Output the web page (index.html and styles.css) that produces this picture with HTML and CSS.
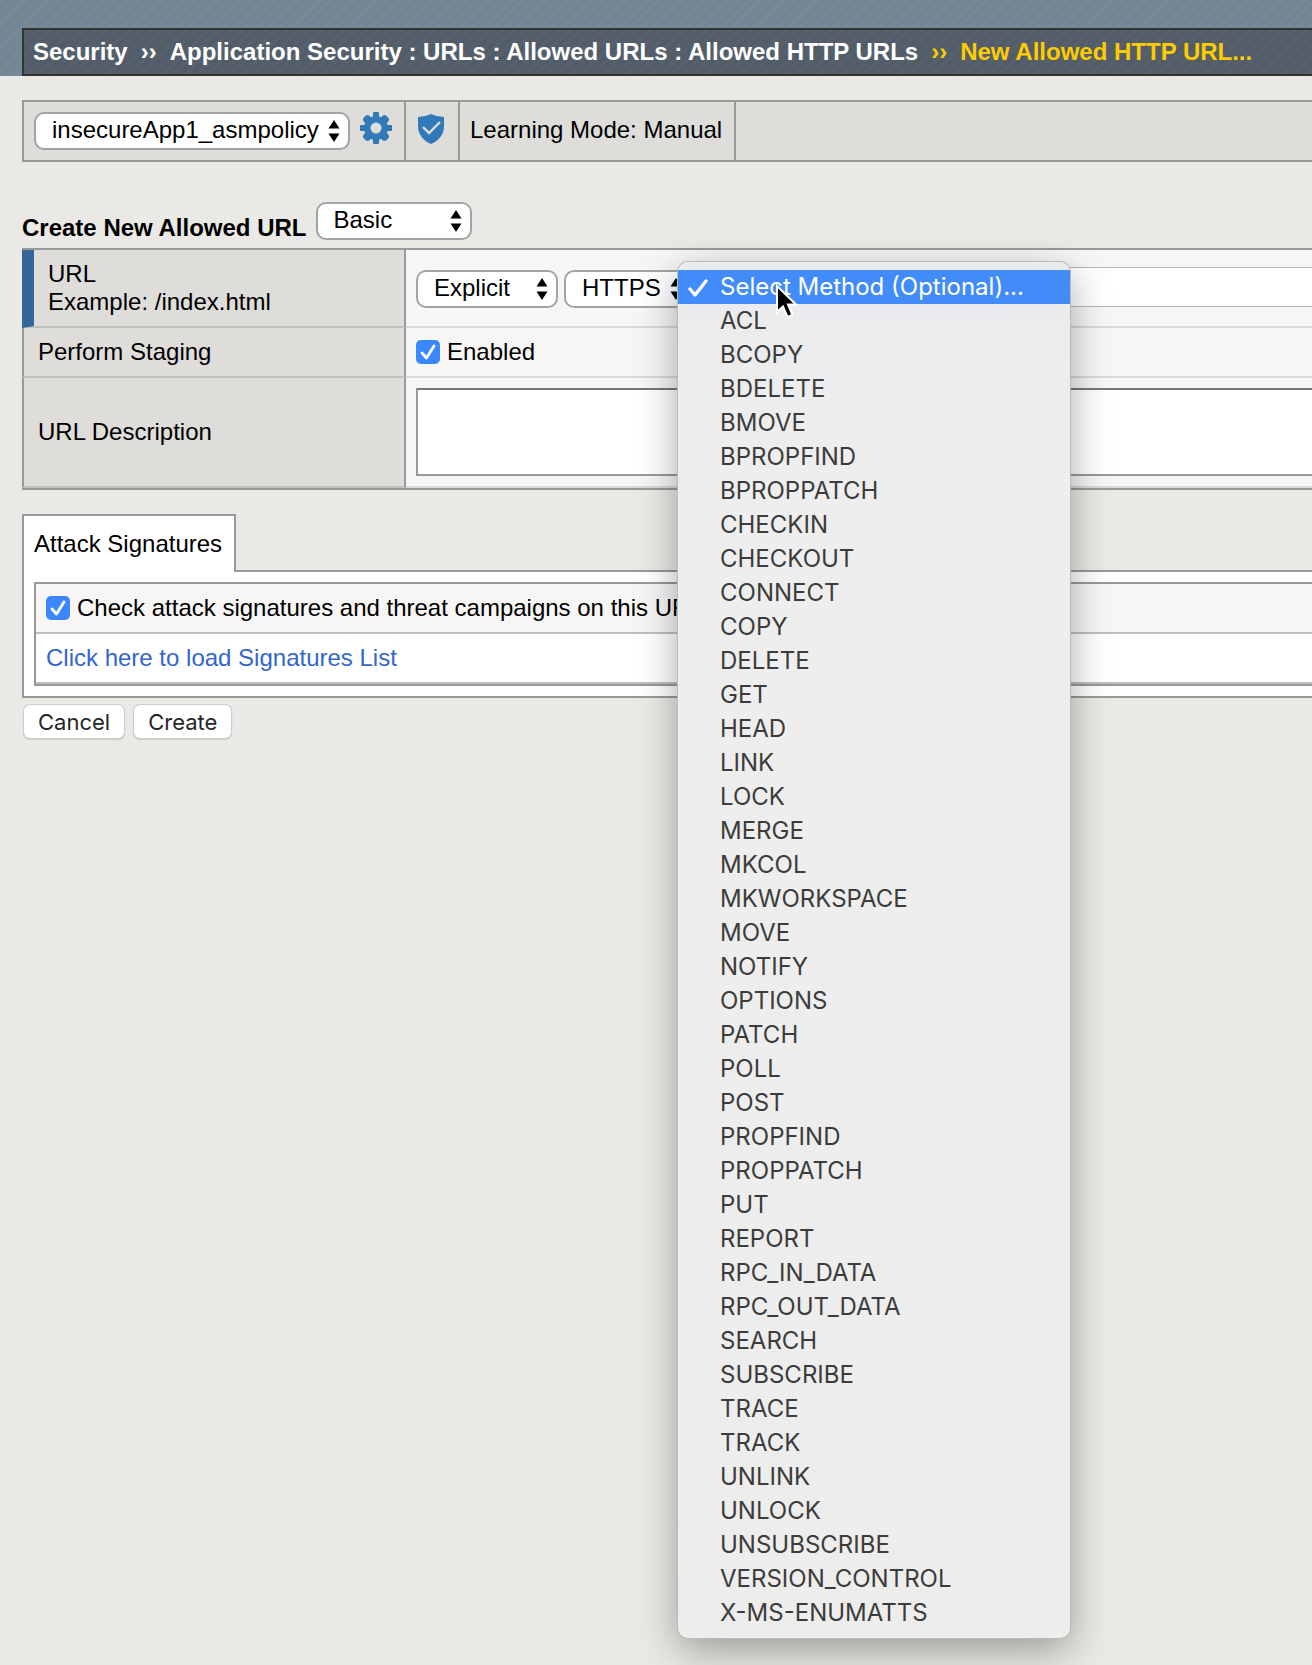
FILE: index.html
```html
<!DOCTYPE html>
<html lang="en">
<head>
<meta charset="utf-8">
<title>New Allowed HTTP URL</title>
<link rel="stylesheet" href="styles.css">
</head>
<body>
<header class="masthead">
  <nav class="breadcrumb" aria-label="Breadcrumb">
    <span>Security</span>
    <span>››</span>
    <span>Application Security : URLs : Allowed URLs : Allowed HTTP URLs</span>
    <span class="current">››</span>
    <span class="current">New Allowed HTTP URL...</span>
  </nav>
</header>
<main class="content">
  <div class="policy-bar">
    <div class="policy-cell policy-picker">
      <select class="select select-policy" aria-label="Policy"><option>insecureApp1_asmpolicy</option></select>
      <svg class="gear" viewBox="0 0 32 32" width="32" height="32" aria-hidden="true">
        <g fill="#317ab9">
          <rect x="13" y="0" width="6" height="32" rx="1"/>
          <rect x="12" y="0" width="8" height="32" rx="3" transform="rotate(45 16 16)"/>
          <rect x="13" y="0" width="6" height="32" rx="1" transform="rotate(90 16 16)"/>
          <rect x="12" y="0" width="8" height="32" rx="3" transform="rotate(135 16 16)"/>
          <circle cx="16" cy="16" r="12"/>
        </g>
        <circle cx="16" cy="16" r="5.5" fill="#dedddA"/>
      </svg>
    </div>
    <div class="policy-cell">
      <svg class="shield" viewBox="0 0 28 30" width="28" height="30" aria-hidden="true">
        <path d="M14 0 Q8 3 1 3 V12 Q1 24 14 30 Q27 24 27 12 V3 Q20 3 14 0Z" fill="#317ab9"/>
        <path d="M6 13 L12 19 L23 8" fill="none" stroke="#dedddA" stroke-width="2.4"/>
      </svg>
    </div>
    <div class="policy-cell">Learning Mode: Manual</div>
  </div>

  <div class="form-head">
    <h1 class="form-title">Create New Allowed URL</h1>
    <select class="select select-level" aria-label="View"><option>Basic</option></select>
  </div>

  <div class="form-grid">
    <div class="row">
      <div class="label required"><label for="url">URL<br>Example: /index.html</label></div>
      <div class="field url-field">
        <select class="select select-type" aria-label="URL type"><option>Explicit</option></select>
        <select class="select select-protocol" aria-label="Protocol"><option>HTTPS</option></select>
        <div class="method">
          <select class="select select-method" aria-label="Method"><option>Select Method (Optional)...</option></select>
          <ul class="menu" role="listbox" aria-label="Method">
            <li class="selected" role="option" aria-selected="true"><svg class="tick" viewBox="0 0 20 20" width="20" height="20" aria-hidden="true"><path d="M2 12 L7 18 L18 4" fill="none" stroke="#fff" stroke-width="3.4" stroke-linecap="round" stroke-linejoin="round"/></svg>Select Method (Optional)...</li>
            <li role="option">ACL</li>
            <li role="option">BCOPY</li>
            <li role="option">BDELETE</li>
            <li role="option">BMOVE</li>
            <li role="option">BPROPFIND</li>
            <li role="option">BPROPPATCH</li>
            <li role="option">CHECKIN</li>
            <li role="option">CHECKOUT</li>
            <li role="option">CONNECT</li>
            <li role="option">COPY</li>
            <li role="option">DELETE</li>
            <li role="option">GET</li>
            <li role="option">HEAD</li>
            <li role="option">LINK</li>
            <li role="option">LOCK</li>
            <li role="option">MERGE</li>
            <li role="option">MKCOL</li>
            <li role="option">MKWORKSPACE</li>
            <li role="option">MOVE</li>
            <li role="option">NOTIFY</li>
            <li role="option">OPTIONS</li>
            <li role="option">PATCH</li>
            <li role="option">POLL</li>
            <li role="option">POST</li>
            <li role="option">PROPFIND</li>
            <li role="option">PROPPATCH</li>
            <li role="option">PUT</li>
            <li role="option">REPORT</li>
            <li role="option">RPC_IN_DATA</li>
            <li role="option">RPC_OUT_DATA</li>
            <li role="option">SEARCH</li>
            <li role="option">SUBSCRIBE</li>
            <li role="option">TRACE</li>
            <li role="option">TRACK</li>
            <li role="option">UNLINK</li>
            <li role="option">UNLOCK</li>
            <li role="option">UNSUBSCRIBE</li>
            <li role="option">VERSION_CONTROL</li>
            <li role="option">X-MS-ENUMATTS</li>
          </ul>
          <svg class="pointer" viewBox="0 0 24 36" width="24" height="36" aria-hidden="true"><path d="M2 2 V28 L8 22.500 L12.500 33 L17.500 31 L13 20.500 H21 Z" fill="#000" stroke="#fff" stroke-width="2"/></svg>
        </div>
        <input class="text-input" id="url" type="text">
      </div>
    </div>
    <div class="row">
      <div class="label">Perform Staging</div>
      <div class="field"><label class="check"><input type="checkbox" checked>Enabled</label></div>
    </div>
    <div class="row">
      <div class="label"><label for="desc">URL Description</label></div>
      <div class="field"><textarea class="textarea" id="desc"></textarea></div>
    </div>
  </div>

  <section class="signatures">
    <div class="tabs"><button class="tab" type="button">Attack Signatures</button></div>
    <div class="panel">
      <div class="panel-table">
        <div class="panel-row tinted"><label class="check"><input type="checkbox" checked>Check attack signatures and threat campaigns on this URL</label></div>
        <div class="panel-row"><a class="link" href="#">Click here to load Signatures List</a></div>
      </div>
    </div>
  </section>

  <div class="actions">
    <button class="button" type="button">Cancel</button>
    <button class="button" type="button">Create</button>
  </div>
</main>
</body>
</html>
```
FILE: styles.css
```css
* { box-sizing: border-box; }

body {
  margin: 0;
  min-height: 100vh;
  background: #eae9e5;
  color: #000;
  font: 24px/28px "Liberation Sans", Arial, sans-serif;
}

select, input, textarea, button { font: inherit; color: inherit; margin: 0; }

.masthead {
  padding: 28px 0 0 22px;
  background: repeating-linear-gradient(135deg, #778899 0, #778899 3px, #738494 5px, #738494 7px, #778899 8px);
}

.breadcrumb {
  display: flex;
  gap: 13px;
  height: 48px;
  padding: 8px 9px;
  border: 2px solid #333;
  border-right: 0;
  background: repeating-linear-gradient(135deg, #55606c 0, #55606c 3px, #515c67 5px, #515c67 7px, #55606c 8px);
  color: #fff;
  font-weight: bold;
  white-space: nowrap;
}

.current { color: #fc0; }

.content { padding: 24px 0 0 22px; }

.policy-bar {
  display: flex;
  height: 62px;
  border: 2px solid #999;
  border-right: 0;
  background: #dedddA;
}

.policy-cell {
  display: flex;
  align-items: flex-start;
  padding: 14px 12px 0 10px;
  border-right: 2px solid #999;
}

.policy-picker { gap: 10px; width: 382px; padding-top: 10px; }
.shield { margin: -2px 1px 0; }

.select {
  appearance: none;
  height: 38px;
  padding: 0 28px 2px 16px;
  border: 2px solid #a3a3a3;
  border-radius: 10px;
  background: #fff url("data:image/svg+xml,%3Csvg xmlns='http://www.w3.org/2000/svg' width='12' height='22'%3E%3Cpath d='M6 0L11.500 8.500H.5zM6 22L11.500 13.500H.5z'/%3E%3C/svg%3E") no-repeat right 8px top 6px;
}

.select-policy { width: 316px; }
.select-level { width: 156px; }
.select-type { width: 142px; }
.select-protocol { width: 128px; }
.select-method { width: 350px; }

.form-head {
  display: flex;
  align-items: flex-end;
  gap: 9px;
  padding: 40px 0 8px;
}

.form-title { margin: 0; font-size: 24px; line-height: 24px; }

.form-grid {
  border-top: 2px solid #999;
  border-bottom: 2px solid #999;
}

.row { display: flex; }

.label {
  display: flex;
  flex: none;
  align-items: center;
  width: 384px;
  padding: 0 14px;
  border: solid #999;
  border-width: 0 2px;
  border-bottom: 2px solid #bfbfbb;
  background: #dedddA;
}

.required {
  align-items: flex-start;
  padding-top: 10px;
  border-left: 12px solid #369;
}

.field {
  flex: 1;
  min-width: 0;
  padding: 10px 0 10px 10px;
  border-bottom: 2px solid #dad9d7;
  background: #f7f6f4;
}

.url-field {
  display: flex;
  gap: 6px;
  padding: 17px 0 18px 10px;
}

.url-field .select { margin-top: 3px; }
.method { position: relative; }

.text-input {
  flex: 1;
  min-width: 0;
  height: 40px;
  padding: 0 8px;
  border: 1px solid #b8b8b8;
  border-right: 0;
  background: #fff;
}

.textarea {
  display: block;
  width: 100%;
  height: 88px;
  border: 2px solid #999;
  border-top-color: #777;
  border-right: 0;
  background: #fff;
  resize: none;
}

.check { display: flex; align-items: center; gap: 7px; white-space: nowrap; }

.check input {
  appearance: none;
  width: 24px;
  height: 24px;
  border-radius: 5px;
  background: #3b88fd url("data:image/svg+xml,%3Csvg xmlns='http://www.w3.org/2000/svg' width='24' height='24'%3E%3Cpath d='M6 13L10.500 18L18 6' fill='none' stroke='white' stroke-width='2.800' stroke-linecap='round' stroke-linejoin='round'/%3E%3C/svg%3E");
}

.signatures { padding-top: 24px; }
.tabs { display: flex; }

.tab {
  position: relative;
  height: 58px;
  margin-bottom: -2px;
  padding: 0 12px 0 10px;
  border: 2px solid #999;
  border-bottom: 0;
  background: #fff;
}

.panel {
  padding: 10px 0 10px 10px;
  border: 2px solid #999;
  border-right: 0;
  background: #fff;
}

.panel-table {
  border: 2px solid #999;
  border-right: 0;
}

.panel-row {
  padding: 10px;
  border-bottom: 2px solid #bfbfbb;
}

.tinted { background: #f7f6f4; }
.link { color: #36c; text-decoration: none; }

.actions { display: flex; gap: 10px; padding: 7px 2px; }

.button {
  height: 33px;
  padding: 0 14px;
  border: 0;
  border-radius: 6px;
  background: #fff;
  box-shadow: 0 0 0 1px #ccc, 0 1px 2px #888;
  color: #262626;
  font: 22px/32px Inter, sans-serif;
}

.menu {
  position: absolute;
  z-index: 1;
  top: -5px;
  left: -20px;
  width: 392px;
  margin: 0;
  padding: 8px 0;
  border-radius: 10px;
  background: linear-gradient(#e9ebee, #eee 200px, #ededec);
  box-shadow: 0 0 0 1px #bbb, 0 12px 40px rgba(0, 0, 0, .35);
  color: #3c3c3c;
  font: 24px/34px Inter, sans-serif;
  list-style: none;
}

.menu li { padding-left: 42px; white-space: nowrap; }
.menu .selected { display: flex; align-items: center; padding-left: 10px; gap: 12px; background: #418cf8; color: #fff; }

.pointer { position: absolute; z-index: 2; top: 17px; left: 77px; }
```
